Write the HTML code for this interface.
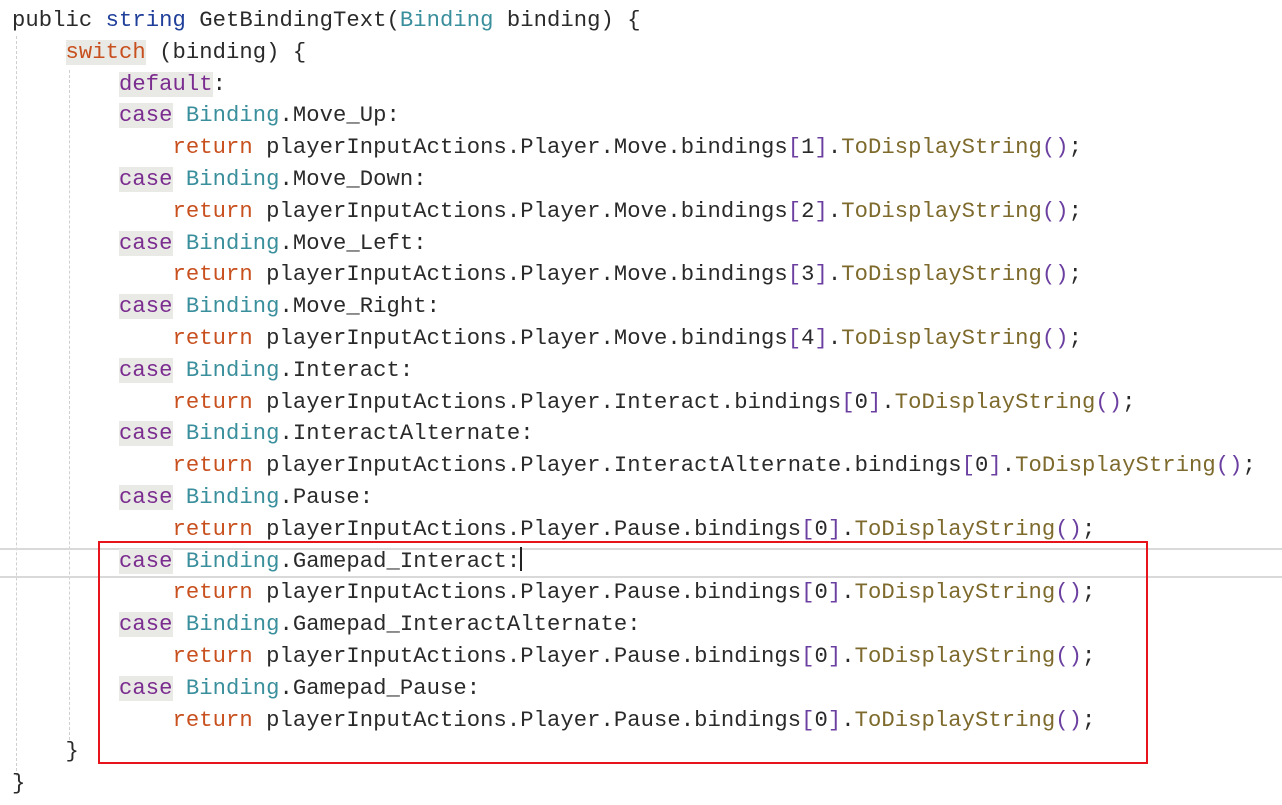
<!DOCTYPE html>
<html><head><meta charset="utf-8"><style>
html,body{margin:0;padding:0;background:#fff;width:1282px;height:805px;overflow:hidden;position:relative}
.code{position:absolute;left:12px;top:5px;font-family:"Liberation Mono","DejaVu Sans Mono",monospace;font-size:22.2px;letter-spacing:0.06px;color:#2a2a2a;white-space:normal;line-height:31.8px}
.code div{height:31.8px;white-space:pre}
.k{color:#c8501e}.c{color:#7b2c8f;background:#e9e9e6}.t{color:#3a8f9c}.m{color:#7d6a2c}.s{color:#1f3f9a}.p{color:#6b3fa0}
.g{position:absolute;width:0;border-left:1px dashed #cfcfcf}
.cur{position:absolute;left:0;width:1282px;height:0;border-top:2px solid #d9d9d9}
.box{position:absolute;left:98px;top:541px;width:1046px;height:219px;border:2px solid #e8141c}
.caret{display:inline-block;width:2px;height:24px;background:#222;vertical-align:-4px}
</style></head><body>
<div class="g" style="left:16px;top:36px;height:740px"></div>
<div class="g" style="left:69px;top:70px;height:670px"></div>
<div class="cur" style="top:548px"></div>
<div class="cur" style="top:576px"></div>
<div class="code"><div>public <span class="s">string</span> GetBindingText(<span class="t">Binding</span> binding) {</div><div>    <span class="k" style="background:#e9e9e6">switch</span> (binding) {</div><div>        <span class="c">default</span>:</div><div>        <span class="c">case</span> <span class="t">Binding</span>.Move_Up:</div><div>            <span class="k">return</span> playerInputActions.Player.Move.bindings<span class="p">[</span>1<span class="p">]</span>.<span class="m">ToDisplayString</span><span class="p">()</span>;</div><div>        <span class="c">case</span> <span class="t">Binding</span>.Move_Down:</div><div>            <span class="k">return</span> playerInputActions.Player.Move.bindings<span class="p">[</span>2<span class="p">]</span>.<span class="m">ToDisplayString</span><span class="p">()</span>;</div><div>        <span class="c">case</span> <span class="t">Binding</span>.Move_Left:</div><div>            <span class="k">return</span> playerInputActions.Player.Move.bindings<span class="p">[</span>3<span class="p">]</span>.<span class="m">ToDisplayString</span><span class="p">()</span>;</div><div>        <span class="c">case</span> <span class="t">Binding</span>.Move_Right:</div><div>            <span class="k">return</span> playerInputActions.Player.Move.bindings<span class="p">[</span>4<span class="p">]</span>.<span class="m">ToDisplayString</span><span class="p">()</span>;</div><div>        <span class="c">case</span> <span class="t">Binding</span>.Interact:</div><div>            <span class="k">return</span> playerInputActions.Player.Interact.bindings<span class="p">[</span>0<span class="p">]</span>.<span class="m">ToDisplayString</span><span class="p">()</span>;</div><div>        <span class="c">case</span> <span class="t">Binding</span>.InteractAlternate:</div><div>            <span class="k">return</span> playerInputActions.Player.InteractAlternate.bindings<span class="p">[</span>0<span class="p">]</span>.<span class="m">ToDisplayString</span><span class="p">()</span>;</div><div>        <span class="c">case</span> <span class="t">Binding</span>.Pause:</div><div>            <span class="k">return</span> playerInputActions.Player.Pause.bindings<span class="p">[</span>0<span class="p">]</span>.<span class="m">ToDisplayString</span><span class="p">()</span>;</div><div>        <span class="c">case</span> <span class="t">Binding</span>.Gamepad_Interact:<span class="caret"></span></div><div>            <span class="k">return</span> playerInputActions.Player.Pause.bindings<span class="p">[</span>0<span class="p">]</span>.<span class="m">ToDisplayString</span><span class="p">()</span>;</div><div>        <span class="c">case</span> <span class="t">Binding</span>.Gamepad_InteractAlternate:</div><div>            <span class="k">return</span> playerInputActions.Player.Pause.bindings<span class="p">[</span>0<span class="p">]</span>.<span class="m">ToDisplayString</span><span class="p">()</span>;</div><div>        <span class="c">case</span> <span class="t">Binding</span>.Gamepad_Pause:</div><div>            <span class="k">return</span> playerInputActions.Player.Pause.bindings<span class="p">[</span>0<span class="p">]</span>.<span class="m">ToDisplayString</span><span class="p">()</span>;</div><div>    }</div><div>}</div></div>
<div class="box"></div>
</body></html>
